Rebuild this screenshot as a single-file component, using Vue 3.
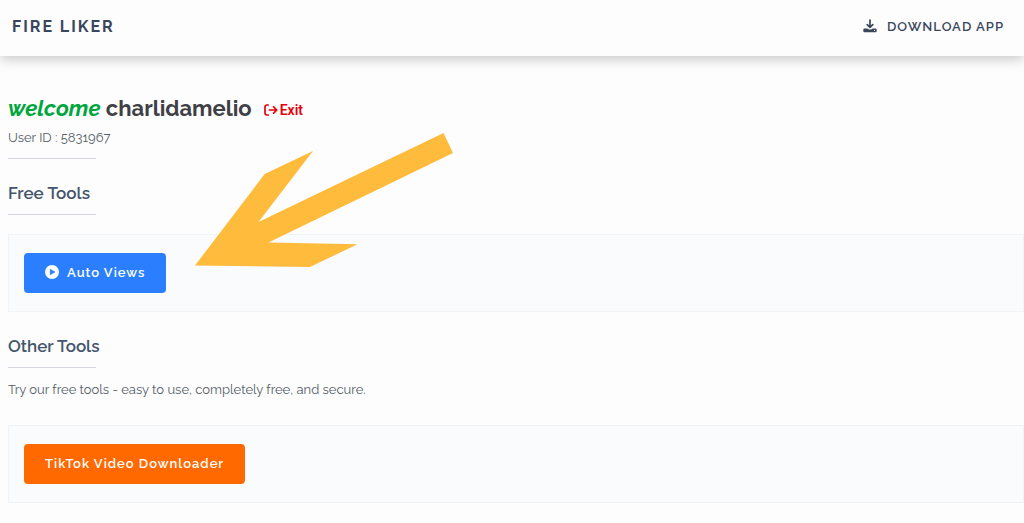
<script setup>
const userName = 'charlidamelio'
const userId = '5831967'
</script>

<template>
  <div class="page">
    <header class="topbar">
      <a class="brand" href="#">FIRE LIKER</a>
      <a class="download" href="#download">
        <svg class="download-icon" viewBox="0 0 14 14" aria-hidden="true">
          <path d="M7 1v7M4.2 5.6 7 8.4l2.8-2.8" fill="none" stroke="currentColor" stroke-width="1.7" stroke-linecap="round" stroke-linejoin="round" />
          <path d="M1.6 9.4h2.6L6 10.6h2l1.8-1.2h2.6a1.3 1.3 0 0 1 1.3 1.3v1.2a1.3 1.3 0 0 1-1.3 1.3H1.6a1.3 1.3 0 0 1-1.3-1.3v-1.2a1.3 1.3 0 0 1 1.3-1.3z" fill="currentColor" />
          <circle cx="11.6" cy="11.3" r=".6" fill="#fff" />
        </svg>
        <span>DOWNLOAD APP</span>
      </a>
    </header>

    <main class="content">
      <div class="greeting">
        <h1 class="title"><em class="welcome">welcome</em> {{ userName }}</h1>
        <a class="exit" href="#exit">
          <svg class="exit-icon" viewBox="0 0 14 12" aria-hidden="true">
            <path d="M4.2 1H2.8A1.8 1.8 0 0 0 1 2.8v6.4A1.8 1.8 0 0 0 2.8 11h1.4M5.4 6h7M9.6 2.9 12.8 6 9.6 9.1" fill="none" stroke="currentColor" stroke-width="1.7" stroke-linecap="round" stroke-linejoin="round" />
          </svg>
          <span>Exit</span>
        </a>
      </div>
      <p class="text">User ID : {{ userId }}</p>
      <hr class="rule" />

      <section class="tools">
        <h2 class="subtitle">Free Tools</h2>
        <hr class="rule" />
        <div class="panel">
          <button class="btn blue" type="button">
            <svg class="play-icon" viewBox="0 0 14 14" aria-hidden="true">
              <circle cx="7" cy="7" r="7" fill="#fff" />
              <path d="M5.2 4.3v5.4L10 7z" fill="#2b7fff" stroke="#2b7fff" stroke-width=".6" stroke-linejoin="round" />
            </svg>
            <span>Auto Views</span>
          </button>
        </div>
      </section>

      <section class="tools">
        <h2 class="subtitle">Other Tools</h2>
        <hr class="rule" />
        <p class="text intro">Try our free tools - easy to use, completely free, and secure.</p>
        <div class="panel">
          <button class="btn orange" type="button">TikTok Video Downloader</button>
        </div>
      </section>

      <svg class="arrow" viewBox="0 0 258 134" aria-hidden="true">
        <path d="M0 132.5 69.7 41 118 18 63.5 89 248.5 0 258 20 73.5 109.5 162.5 111.2 115 134z" fill="#ffbb3c" />
      </svg>
    </main>
  </div>
</template>

<style>
body {
  margin: 0;
  background: #fdfdfd;
}
</style>

<style scoped>
.page {
  font-family: Raleway, Lato, "Open Sans", sans-serif;
  color: #45556c;
}

.topbar {
  display: flex;
  align-items: center;
  justify-content: space-between;
  height: 56px;
  padding: 0 20px 4px 12px;
  box-sizing: border-box;
  background: #fdfdfd;
  box-shadow: 0 3px 12px rgba(0, 0, 0, 0.22);
}

.brand,
.download {
  color: #39465c;
  text-decoration: none;
}

.brand {
  font-size: 16px;
  font-weight: 700;
  letter-spacing: 2px;
}

.download {
  display: flex;
  align-items: center;
  gap: 10px;
  font-size: 13px;
  font-weight: 600;
  letter-spacing: 1px;
}

.download-icon {
  width: 14px;
  height: 14px;
}

.content {
  position: relative;
  padding: 36px 0 20px 8px;
}

.greeting {
  display: flex;
  align-items: baseline;
  gap: 12px;
}

.title {
  margin: 0;
  font-size: 22px;
  line-height: 32px;
  font-weight: 700;
  color: #3f3f46;
}

.welcome {
  color: #00a63e;
}

.exit {
  display: flex;
  align-items: center;
  gap: 2px;
  font-family: Roboto, "Open Sans", sans-serif;
  font-size: 14px;
  line-height: 20px;
  font-weight: 600;
  color: #e7000b;
  text-decoration: none;
}

.exit-icon {
  width: 14px;
  height: 12px;
}

.text {
  margin: 4px 0 0;
  font-size: 13px;
  line-height: 20px;
  color: #565d68;
}

.rule {
  width: 88px;
  height: 1px;
  margin: 9px 0 0;
  border: 0;
  background: #d5d7e0;
}

.greeting ~ .rule {
  margin-top: 10px;
}

.tools {
  margin-top: 22px;
}

.subtitle {
  margin: 0;
  font-size: 17px;
  line-height: 24px;
  font-weight: 600;
}

.intro {
  margin-top: 12px;
  margin-bottom: 25px;
}

.panel {
  margin-top: 19px;
  padding: 18px 15px;
  border: 1px solid #f1f3f4;
  background: #f9fbfc;
}

.btn {
  display: flex;
  align-items: center;
  gap: 8px;
  height: 40px;
  padding: 0 21px 2px;
  border: 0;
  border-radius: 4px;
  font-family: inherit;
  font-size: 13px;
  font-weight: 600;
  letter-spacing: 1px;
  color: #fff;
}

.blue {
  background: #2b7fff;
}

.orange {
  background: #ff6900;
}

.play-icon {
  width: 14px;
  height: 14px;
}

.arrow {
  position: absolute;
  left: 195px;
  top: 77px;
  width: 258px;
  height: 134px;
  pointer-events: none;
}
</style>
